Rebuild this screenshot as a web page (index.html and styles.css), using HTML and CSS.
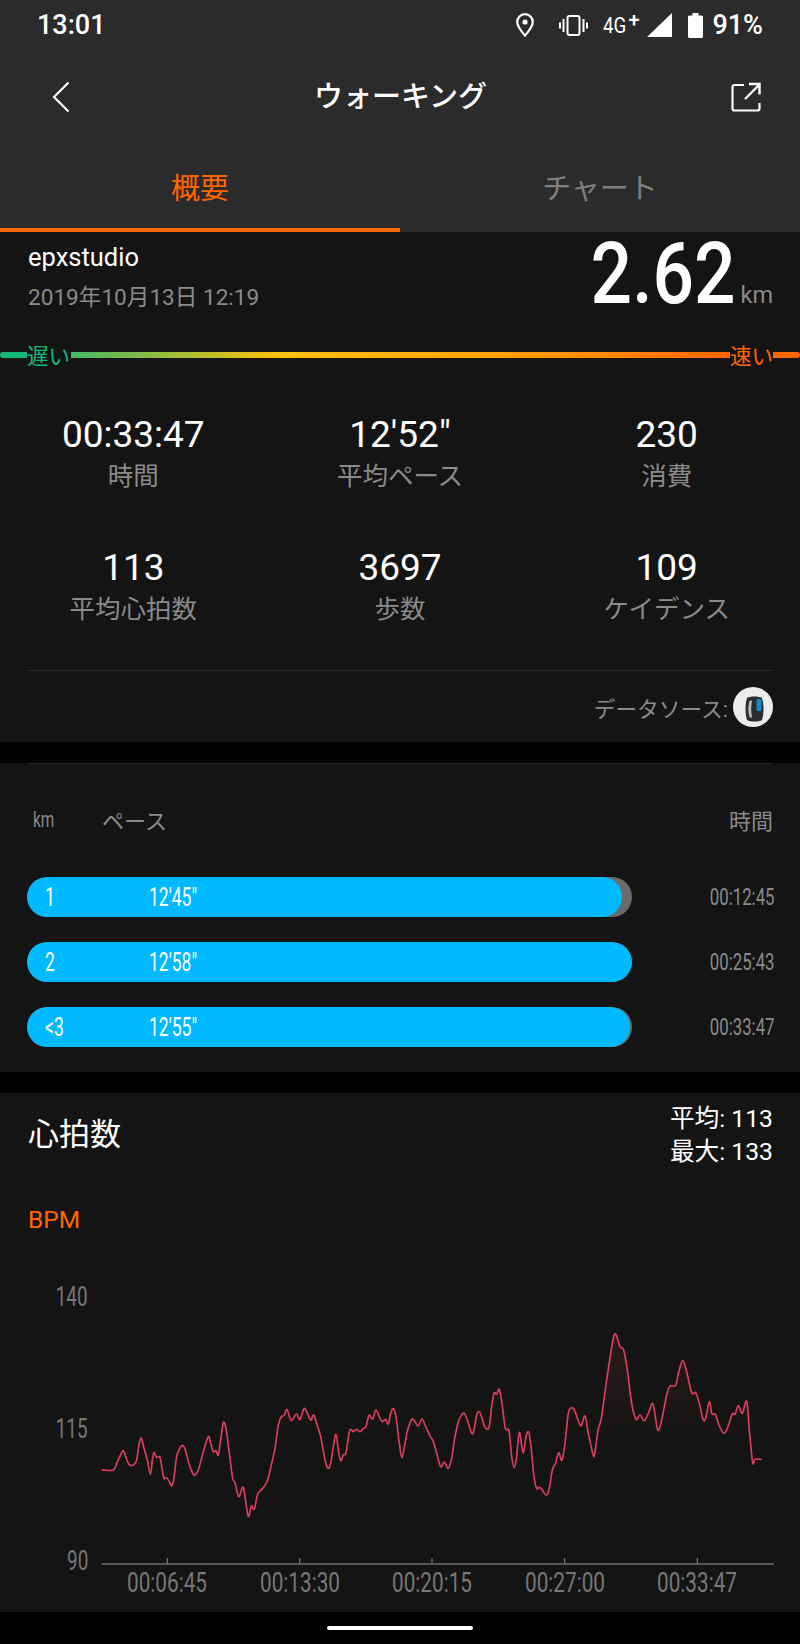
FILE: index.html
```html
<!DOCTYPE html>
<html lang="ja">
<head>
  <meta charset="UTF-8">
  <title>ウォーキング</title>
  <meta name="viewport" content="width=device-width, initial-scale=1">
  <link rel="stylesheet" href="styles.css">
</head>
<body>
  <header class="top">
    <div class="status">
      <span class="clock">13:01</span>
      <div class="status-right">
        <svg class="ic-pin" width="18" height="24" viewBox="0 0 18 24"><path d="M9 1.200C4.600 1.200 1.200 4.600 1.200 9c0 2.900 2.600 7.600 7.800 13.600C14.200 16.600 16.800 11.900 16.800 9 16.800 4.600 13.400 1.200 9 1.200z" fill="none" stroke="#fff" stroke-width="2.200"/><circle cx="9" cy="9" r="2.600" fill="#fff"/></svg>
        <svg class="ic-vib" width="29" height="21" viewBox="0 0 29 21"><rect x="8.500" y="1" width="12" height="19" rx="2" fill="none" stroke="#fff" stroke-width="2"/><path d="M4.500 4v13M1 7.500v6M24.500 4v13M28 7.500v6" stroke="#fff" stroke-width="2"/></svg>
        <span class="net"><span class="net-g">4G</span><span class="net-plus">+</span></span>
        <svg class="ic-signal" width="25" height="24" viewBox="0 0 25 24"><path d="M25 0v24H0z" fill="#fff"/></svg>
        <svg class="ic-batt" width="15" height="25" viewBox="0 0 15 25"><path d="M4.500 0h6v2.500H13.500a1.500 1.500 0 0 1 1.500 1.500v19.500a1.500 1.500 0 0 1-1.500 1.500h-12A1.500 1.500 0 0 1 0 23.500V4a1.500 1.500 0 0 1 1.500-1.500h3z" fill="#fff"/></svg>
        <span class="batt-text">91%</span>
      </div>
    </div>
    <div class="toolbar">
      <svg class="ic-back" width="18" height="32" viewBox="0 0 18 32"><path d="M16.500 1.500 2 16l14.500 14.500" fill="none" stroke="#fff" stroke-width="2.200"/></svg>
      <h1>ウォーキング</h1>
      <svg class="ic-share" width="30" height="30" viewBox="0 0 30 30"><path d="M13 3H3.500a2 2 0 0 0-2 2v21.500a2 2 0 0 0 2 2h23a2 2 0 0 0 2-2V21" fill="none" stroke="#fff" stroke-width="2.200"/><path d="M14 17 28 3M18 2h10.500v10.500" fill="none" stroke="#fff" stroke-width="2.400"/></svg>
    </div>
    <nav class="tabs">
      <div class="tab tab-on">概要</div>
      <div class="tab">チャート</div>
    </nav>
  </header>

  <section class="panel summary">
    <div class="run-head">
      <div>
        <div class="user">epxstudio</div>
        <div class="date">2019年10月13日 12:19</div>
      </div>
      <div class="dist"><span class="dist-num">2.62</span><span class="dist-unit">km</span></div>
    </div>
    <div class="speed">
      <span class="seg seg-slow"></span>
      <span class="speed-slow">遅い</span>
      <span class="seg seg-grad"></span>
      <span class="speed-fast">速い</span>
      <span class="seg seg-fast"></span>
    </div>
    <div class="stats">
      <div class="stat"><div class="stat-val">00:33:47</div><div class="stat-lbl">時間</div></div>
      <div class="stat"><div class="stat-val">12'52"</div><div class="stat-lbl">平均ペース</div></div>
      <div class="stat"><div class="stat-val">230</div><div class="stat-lbl">消費</div></div>
      <div class="stat"><div class="stat-val">113</div><div class="stat-lbl">平均心拍数</div></div>
      <div class="stat"><div class="stat-val">3697</div><div class="stat-lbl">歩数</div></div>
      <div class="stat"><div class="stat-val">109</div><div class="stat-lbl">ケイデンス</div></div>
    </div>
    <div class="source">
      <span>データソース:</span>
      <svg class="ic-band" width="40" height="40" viewBox="0 0 40 40">
        <circle cx="20" cy="20" r="20" fill="#ececec"/>
        <path d="M14 11c3-2 12-2 15 0 2 6 2 16 0 22-3 2-12 2-15 0-2-6-2-16 0-22z" fill="#2a2c2f"/>
        <path d="M16.500 14c-1.500 5-1.500 11 0 16 1 .6 1.800 .6 2.600 .3-1.200-5-1.200-12 0-16.800-.9-.2-1.800 0-2.600 .5z" fill="#bdbdbd"/>
        <rect x="23.500" y="12" width="5" height="12" rx="1" fill="#1588c9"/>
      </svg>
    </div>
  </section>

  <section class="panel laps">
    <div class="laps-head">
      <span class="col-km"><span class="narrow">km</span></span>
      <span class="col-pace">ペース</span>
      <span class="col-time">時間</span>
    </div>
    <div class="lap">
      <div class="lap-bar"><div class="lap-fill" style="width:98.3%"><span class="lap-no"><span class="narrow">1</span></span><span class="narrow">12'45"</span></div></div>
      <div class="lap-time"><span class="narrow-r">00:12:45</span></div>
    </div>
    <div class="lap">
      <div class="lap-bar"><div class="lap-fill" style="width:100%"><span class="lap-no"><span class="narrow">2</span></span><span class="narrow">12'58"</span></div></div>
      <div class="lap-time"><span class="narrow-r">00:25:43</span></div>
    </div>
    <div class="lap">
      <div class="lap-bar"><div class="lap-fill" style="width:99.6%"><span class="lap-no"><span class="narrow">&lt;3</span></span><span class="narrow">12'55"</span></div></div>
      <div class="lap-time"><span class="narrow-r">00:33:47</span></div>
    </div>
  </section>

  <section class="panel heart">
    <div class="heart-head">
      <h2>心拍数</h2>
      <div class="heart-sum">
        <div>平均: 113</div>
        <div>最大: 133</div>
      </div>
    </div>
    <div class="bpm">BPM</div>
    <div class="chart">
      <div class="y-axis">
        <span class="narrow-r">140</span>
        <span class="narrow-r">115</span>
        <span class="narrow-r">90</span>
      </div>
      <!-- units are a third of a pixel, origin at the left of the panel -->
      <svg class="plot" width="674" height="296" viewBox="60 -90 2022 888">
        <defs>
          <linearGradient id="hrFill" gradientUnits="userSpaceOnUse" x1="0" y1="100" x2="0" y2="430">
            <stop offset="0" stop-color="#d93f5c" stop-opacity=".12"/>
            <stop offset="1" stop-color="#d93f5c" stop-opacity="0"/>
          </linearGradient>
        </defs>
        <path id="hrArea" fill="url(#hrFill)"/>
        <path id="hrLine" class="hr-line"/>
        <path class="axis" d="M65 792H2082M262 774V792M659 774V792M1056 774V792M1454 774V792M1852 774V792"/>
      </svg>
    </div>
    <div class="x-axis">
      <span class="x-tick"><span class="narrow-c">00:06:45</span></span>
      <span class="x-tick"><span class="narrow-c">00:13:30</span></span>
      <span class="x-tick"><span class="narrow-c">00:20:15</span></span>
      <span class="x-tick"><span class="narrow-c">00:27:00</span></span>
      <span class="x-tick"><span class="narrow-c">00:33:47</span></span>
    </div>
  </section>

  <div class="navbar"><span class="home"></span></div>
  <script src="chart.js"></script>
</body>
</html>
```

FILE: styles.css
```css
* {
  box-sizing: border-box;
}
body {
  margin: 0;
  width: 800px;
  background: #000;
  color: #fff;
  font-family: Roboto, "Noto Sans CJK JP", sans-serif;
}

/* condensed numerals */
.narrow, .narrow-r, .narrow-c {
  display: inline-block;
  transform: scaleX(.7);
}
.narrow { transform-origin: left center; }
.narrow-r { transform-origin: right center; }
.narrow-c { transform-origin: center; }

/* header */
.top {
  background: #2b2b2b;
  height: 232px;
}
.status {
  height: 50px;
  padding: 0 37px;
  display: flex;
  align-items: center;
  justify-content: space-between;
}
.clock {
  font-size: 27px;
  font-weight: 500;
}
.status-right {
  display: flex;
  align-items: center;
}
.ic-pin { margin-right: 25px; }
.ic-vib { margin-right: 15px; }
.net {
  display: flex;
  align-items: flex-start;
  width: 38px;
  margin-right: 6px;
  font-size: 22px;
}
.net-g {
  display: inline-block;
  width: 25px;
  transform: scaleX(.85);
  transform-origin: left center;
}
.net-plus { font-size: 20px; font-weight: 500; margin-top: -5px; }
.ic-signal { margin-right: 16px; }
.ic-batt { margin-right: 9px; }
.batt-text {
  font-size: 27px;
  font-weight: 500;
}
.toolbar {
  height: 90px;
  padding: 3px 39px 0 52px;
  display: flex;
  align-items: center;
  justify-content: space-between;
}
.toolbar h1 {
  margin: 0;
  font-size: 29px;
  font-weight: 500;
  line-height: 40px;
}
.tabs {
  height: 92px;
  display: flex;
}
.tab {
  width: 400px;
  padding-top: 29px;
  text-align: center;
  font-size: 29px;
  line-height: 40px;
  color: #808080;
  border-bottom: 4px solid transparent;
}
.tab-on {
  color: #ff6600;
  border-bottom-color: #ff6600;
}

/* panels */
.panel {
  background: #141414;
}
.summary {
  height: 510px;
  margin-bottom: 21px;
}
.run-head {
  height: 103px;
  padding: 10px 27px 0 28px;
  display: flex;
  justify-content: space-between;
}
.user {
  font-size: 25.500px;
  line-height: 30px;
}
.date {
  margin-top: 11px;
  font-size: 22.600px;
  line-height: 30px;
  color: #8a8a8a;
}
.dist {
  display: flex;
  align-items: baseline;
  height: 70px;
  margin-top: -10px;
}
.dist-num {
  display: inline-block;
  font-size: 86px;
  font-weight: 500;
  line-height: 84px;
  transform: scaleX(.85);
  transform-origin: right center;
}
.dist-unit {
  margin-left: 5px;
  font-size: 23.500px;
  color: #8a8a8a;
}

.speed {
  height: 40px;
  display: flex;
  align-items: center;
  font-size: 21.500px;
}
.seg {
  height: 6px;
}
.seg-slow {
  width: 27px;
  background: #14b87c;
  border-radius: 3px 0 0 3px;
}
.seg-grad {
  flex: 1;
  background: linear-gradient(90deg, #45b765 0%, #ffc107 32%, #ff9b00 70%, #ff6600 100%);
}
.seg-fast {
  width: 27px;
  background: #ff6600;
  border-radius: 0 3px 3px 0;
}
.speed-slow {
  width: 44px;
  padding-bottom: 1px;
  color: #14b87c;
}
.speed-fast {
  width: 43px;
  padding-bottom: 1px;
  color: #ff6600;
}

.stats {
  margin-top: 38px;
  display: grid;
  grid-template-columns: repeat(3, 1fr);
  row-gap: 52px;
  text-align: center;
}
.stat-val {
  font-size: 37px;
  line-height: 44px;
}
.stat-lbl {
  margin-top: 1px;
  font-size: 25.500px;
  line-height: 36px;
  color: #8a8a8a;
}

.source {
  margin: 43px 27px 0 28px;
  height: 73px;
  border-top: 1px solid #2a2a2a;
  display: flex;
  align-items: center;
  justify-content: flex-end;
  gap: 5px;
  font-size: 21.700px;
  color: #8a8a8a;
}

/* per-km table */
.laps {
  height: 309px;
  margin-bottom: 21px;
  padding-top: 41px;
}
.laps::before {
  content: "";
  display: block;
  height: 1px;
  margin: -41px 27px 40px;
  background: #2a2a2a;
}
.laps-head {
  height: 30px;
  padding: 0 27px 0 33px;
  display: flex;
  align-items: center;
  font-size: 22px;
  color: #8a8a8a;
}
.col-km { width: 69px; }
.col-pace { flex: 1; }
.lap {
  margin: 0 25px 25px 27px;
  display: flex;
  align-items: center;
  justify-content: space-between;
}
.laps-head + .lap {
  margin-top: 43px;
}
.lap-bar {
  width: 605px;
  height: 40px;
  border-radius: 20px;
  background: #6b6b6b;
  overflow: hidden;
}
.lap-fill {
  height: 40px;
  border-radius: 20px;
  background: #00b9ff;
  display: flex;
  align-items: center;
  padding-left: 18px;
  font-size: 25px;
  white-space: nowrap;
}
.lap-no { width: 104px; }
.lap-time {
  font-size: 24px;
  color: #8a8a8a;
}

/* heart rate */
.heart {
  height: 519px;
  padding-top: 9px;
}
.heart-head {
  padding: 0 27px 0 28px;
  display: flex;
  justify-content: space-between;
  align-items: center;
}
.heart-head h2 {
  margin: 0 0 8px;
  font-size: 31px;
  font-weight: 400;
}
.heart-sum {
  font-size: 24.700px;
  line-height: 33px;
  text-align: right;
}
.bpm {
  margin: 37px 0 0 28px;
  font-size: 24.500px;
  line-height: 30px;
  color: #ff6600;
}
.chart {
  margin-top: 35px;
  display: flex;
}
.y-axis {
  width: 100px;
  height: 306.500px;
  margin-bottom: -10.500px;
  padding: 10.500px 12px 0 0;
  display: flex;
  flex-direction: column;
  justify-content: space-between;
  align-items: flex-end;
  font-size: 27px;
  line-height: 32px;
  color: #777;
}
.plot {
  display: block;
}
.hr-line {
  fill: none;
  stroke: #d93f5c;
  stroke-width: 5;
  stroke-linejoin: round;
}
.axis {
  stroke: #6e6e6e;
  stroke-width: 4;
  fill: none;
}
.x-axis {
  margin: 0 0 0 100.750px;
  width: 662.500px;
  display: grid;
  grid-template-columns: repeat(5, 1fr);
  text-align: center;
  font-size: 28px;
  line-height: 34px;
  color: #777;
}
.x-axis .narrow-c {
  transform: scaleX(.74);
}

.navbar {
  height: 32px;
  display: flex;
  align-items: center;
  justify-content: center;
}
.home {
  width: 146px;
  height: 4px;
  border-radius: 2px;
  background: #fff;
}
```

FILE: chart.js
```js
// heart rate samples as x,y pairs in plot units
const hr = [65,510,100,510,110,490,120,468,130,452,137,470,147,493,160,495,170,480,176,440,183,414,192,445,202,480,211,523,217,480,222,458,230,472,240,472,246,505,252,535,259,533,268,545,275,558,281,540,290,470,298,448,308,436,316,450,328,495,338,520,345,526,355,510,370,455,385,410,392,430,400,455,408,452,415,465,422,420,430,368,438,385,448,460,458,535,465,548,476,590,487,563,492,570,500,625,506,650,514,618,523,627,532,585,540,573,552,560,563,540,575,490,585,445,595,375,603,352,613,345,621,329,632,360,640,355,650,342,660,358,672,326,680,335,692,360,701,345,710,370,722,410,735,480,744,505,752,490,760,440,768,403,775,450,782,482,790,465,798,458,808,395,815,390,820,395,830,388,840,395,850,385,858,380,867,346,878,357,888,330,900,355,908,365,916,358,925,372,932,340,940,326,948,350,958,430,966,473,975,430,983,390,995,358,1005,365,1014,378,1026,357,1035,375,1050,408,1060,425,1070,460,1082,500,1093,486,1105,505,1115,475,1125,410,1135,365,1145,345,1153,340,1162,360,1175,400,1182,390,1190,345,1198,335,1206,355,1215,382,1227,382,1235,320,1242,280,1250,282,1258,268,1266,310,1276,385,1287,392,1295,470,1303,503,1310,470,1318,397,1329,458,1338,410,1346,396,1353,440,1362,530,1370,565,1378,562,1388,572,1399,586,1408,565,1417,510,1427,488,1436,458,1446,481,1455,430,1465,340,1475,323,1485,335,1502,377,1515,348,1525,400,1538,460,1543,466,1550,420,1555,385,1564,355,1580,240,1598,125,1607,102,1620,140,1631,150,1642,210,1655,310,1668,358,1680,345,1693,362,1705,340,1718,310,1726,350,1734,392,1745,360,1760,285,1770,258,1787,256,1795,220,1808,182,1820,215,1835,278,1847,278,1858,310,1870,360,1878,350,1888,305,1896,342,1906,343,1918,378,1932,400,1942,385,1957,342,1965,343,1975,317,1987,340,2000,304,2008,390,2018,487,2025,478,2045,478];

// smooth the samples with catmull-rom segments
function smooth(p) {
  let d = `M${p[0]} ${p[1]}`;
  for (let i = 0; i < p.length - 2; i += 2) {
    const x0 = p[Math.max(i - 2, 0)], y0 = p[Math.max(i - 1, 1)];
    const x1 = p[i], y1 = p[i + 1], x2 = p[i + 2], y2 = p[i + 3];
    const x3 = p[Math.min(i + 4, p.length - 2)], y3 = p[Math.min(i + 5, p.length - 1)];
    const c1x = x1 + (x2 - x0) / 6, c1y = y1 + (y2 - y0) / 6;
    const c2x = x2 - (x3 - x1) / 6, c2y = y2 - (y3 - y1) / 6;
    d += `C${c1x} ${c1y} ${c2x} ${c2y} ${x2} ${y2}`;
  }
  return d;
}

const line = smooth(hr);
document.getElementById('hrLine').setAttribute('d', line);
document.getElementById('hrArea').setAttribute('d', line + 'V792H65Z');
```
